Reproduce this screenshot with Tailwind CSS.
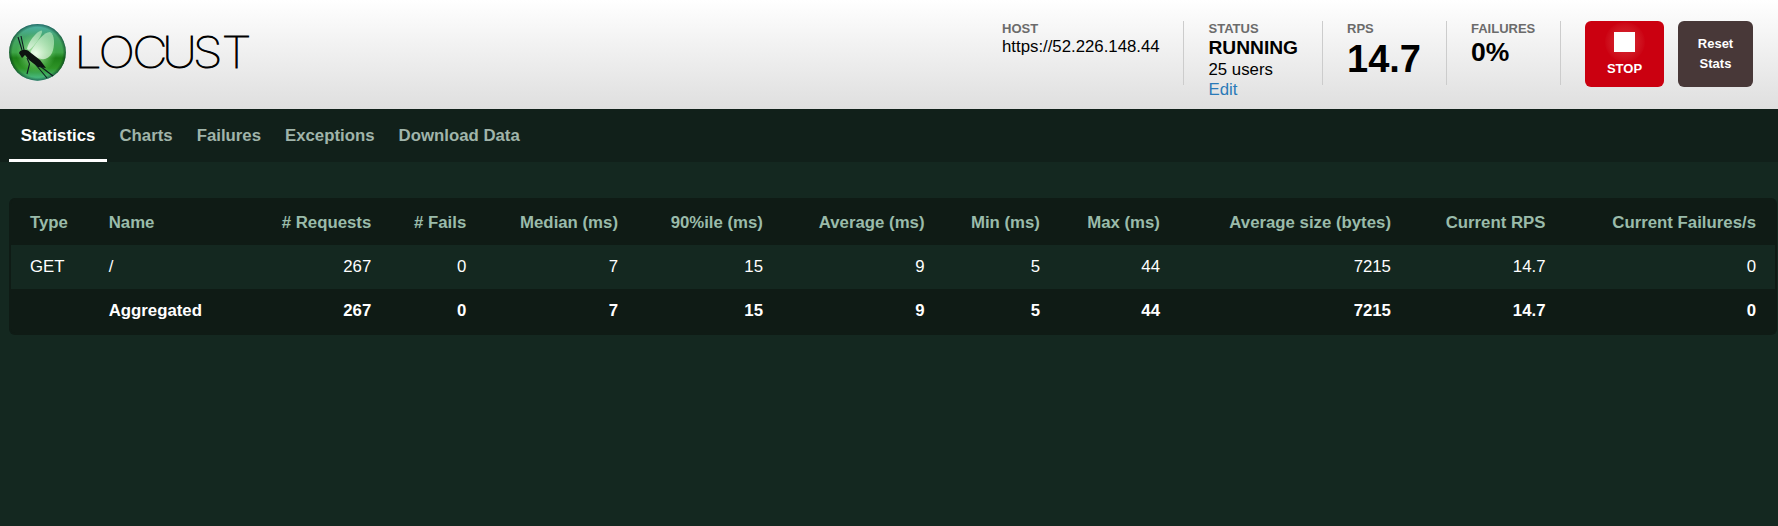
<!DOCTYPE html>
<html lang="en">
<head>
<meta charset="utf-8">
<title>Locust</title>
<script src="https://cdn.jsdelivr.net/npm/@tailwindcss/browser@4"></script>
</head>
<body class="min-h-screen overflow-hidden bg-[#142820] font-['Liberation_Sans',Arial,sans-serif] text-[16.8px] leading-5 text-white">
<header class="flex h-[109px] justify-between bg-linear-to-b from-white to-[#dfdfdf] text-black">
  <svg class="h-[109px] w-[260px]" viewBox="0 0 260 109" aria-label="Locust">
    <defs>
      <linearGradient id="ball" x1="0" y1="0" x2="0" y2="1">
        <stop offset="0" stop-color="#4db3b0"/><stop offset=".22" stop-color="#45a56c"/><stop offset=".5" stop-color="#3fa548"/><stop offset=".6" stop-color="#1d7f18"/><stop offset=".78" stop-color="#2f9427"/><stop offset="1" stop-color="#4fc49a"/>
      </linearGradient>
      <radialGradient id="glow" cx=".5" cy=".5" r=".5"><stop offset="0" stop-color="#e6ffdc" stop-opacity=".95"/><stop offset="1" stop-color="#7be07a" stop-opacity="0"/></radialGradient>
      <radialGradient id="rim" cx=".5" cy=".5" r=".5"><stop offset=".88" stop-color="#04300f" stop-opacity="0"/><stop offset="1" stop-color="#04302f" stop-opacity=".6"/></radialGradient>
      <linearGradient id="wing" x1="0" y1="1" x2="1" y2="0"><stop offset="0" stop-color="#fff" stop-opacity=".7"/><stop offset="1" stop-color="#b8ecb8" stop-opacity=".6"/></linearGradient>
    </defs>
    <circle cx="37.5" cy="52.3" r="28.4" fill="url(#ball)"/>
    <circle cx="36" cy="53" r="20" fill="url(#glow)"/>
    <circle cx="37.5" cy="52.3" r="28.4" fill="url(#rim)"/>
    <path d="M27 49C28 42 37 31 41.500 30.500C44 31 38 43 29 50Z" fill="url(#wing)"/>
    <path d="M31 51C37 41 44 32 50 32C55 34 55 46 52 53C48 61 40 61 31 54Z" fill="url(#wing)"/>
    <path d="M19 53C20 50 24 49 28 50.500L31 53L40 60L46 68L38 67L29 60L25 55L22 58Z" fill="#0d1210"/>
    <path d="M22 50L18 37M24 50L21 36M27 58L29.500 64L27 74M36 65L47 78M40 66L53 76" fill="none" stroke="#0d1a20" stroke-width="1.100"/>
    <text transform="scale(1.12 1)" x="66.200 87.900 118.100 144.600 172.200 197.800" y="67.800" class="fill-black stroke-black stroke-[.9] font-[Inter] text-[43.6px] font-thin">LOCUST</text>
  </svg>
  <div class="flex pt-[21px] pr-[25px]">
    <section class="h-16 w-[182px] border-r border-[#cccccc] whitespace-nowrap">
      <h2 class="h-[15px] text-[13px] leading-[15px] font-bold text-[#6b6b6b]">HOST</h2>
      <p class="leading-[21px]">https://52.226.148.44</p>
    </section>
    <section class="h-16 w-[139px] border-r border-[#cccccc] pl-[24.5px]">
      <h2 class="h-[15px] text-[13px] leading-[15px] font-bold text-[#6b6b6b]">STATUS</h2>
      <p class="pt-px text-[19.2px] leading-[22px] font-bold">RUNNING</p>
      <p class="leading-[22px]">25 users</p>
      <a class="block leading-[18px] text-[#2a7ab8]">Edit</a>
    </section>
    <section class="h-16 w-[124px] border-r border-[#cccccc] pl-6">
      <h2 class="h-[15px] text-[13px] leading-[15px] font-bold text-[#6b6b6b]">RPS</h2>
      <p class="pt-px text-[38px] leading-[45px] font-bold">14.7</p>
    </section>
    <section class="h-16 w-[114px] border-r border-[#cccccc] pl-6">
      <h2 class="h-[15px] text-[13px] leading-[15px] font-bold text-[#6b6b6b]">FAILURES</h2>
      <p class="text-[26.5px] leading-[33px] font-bold">0%</p>
    </section>
    <button class="ml-6 flex h-[66px] w-[79px] flex-col items-center rounded-md bg-[#cb0010] text-[13px] leading-[15px] font-bold text-white">
      <span class="mt-px -mb-px flex size-10 items-center justify-center rounded-full bg-radial from-[#d82835] to-[#cb0010] to-75%"><span class="h-5 w-[21px] bg-white"></span></span>STOP
    </button>
    <button class="ml-[14px] flex h-[66px] w-[75px] flex-col justify-center rounded-md bg-[#483838] text-center text-[13px] leading-5 font-bold text-white"><span>Reset</span><span>Stats</span></button>
  </div>
</header>
<nav class="flex h-[53px] bg-[#11201a] pl-[9px] font-bold text-[#a0b4aa]">
  <a class="mr-[.5px] border-b-3 border-white px-[11.7px] pt-[17px] text-white">Statistics</a>
  <a class="px-3 pt-[17px]">Charts</a>
  <a class="px-3 pt-[17px]">Failures</a>
  <a class="px-3 pt-[17px]">Exceptions</a>
  <a class="px-3 pt-[17px]">Download Data</a>
</nav>
<main class="pt-9 pl-[9px]">
  <div class="w-[1768px] rounded-md border-x-2 border-b-2 border-[#0f1b15] bg-[#0f1b15] text-right whitespace-nowrap">
    <div class="grid h-[47px] grid-cols-[78.7px_140.3px_160.3px_95px_151.7px_145px_161.5px_115.5px_120px_231px_154.5px_210.5px] items-center pt-[3px] font-bold text-[#9abbaa] *:px-[19px]">
      <div class="text-left">Type</div><div class="text-left">Name</div><div># Requests</div><div># Fails</div><div>Median (ms)</div><div>90%ile (ms)</div><div>Average (ms)</div><div>Min (ms)</div><div>Max (ms)</div><div>Average size (bytes)</div><div>Current RPS</div><div>Current Failures/s</div>
    </div>
    <div class="grid h-11 grid-cols-[78.7px_140.3px_160.3px_95px_151.7px_145px_161.5px_115.5px_120px_231px_154.5px_210.5px] items-center bg-[#142820] *:px-[19px]">
      <div class="text-left">GET</div><div class="text-left">/</div><div>267</div><div>0</div><div>7</div><div>15</div><div>9</div><div>5</div><div>44</div><div>7215</div><div>14.7</div><div>0</div>
    </div>
    <div class="grid h-11 grid-cols-[78.7px_140.3px_160.3px_95px_151.7px_145px_161.5px_115.5px_120px_231px_154.5px_210.5px] items-center font-bold *:px-[19px]">
      <div></div><div class="text-left">Aggregated</div><div>267</div><div>0</div><div>7</div><div>15</div><div>9</div><div>5</div><div>44</div><div>7215</div><div>14.7</div><div>0</div>
    </div>
  </div>
</main>
</body>
</html>
